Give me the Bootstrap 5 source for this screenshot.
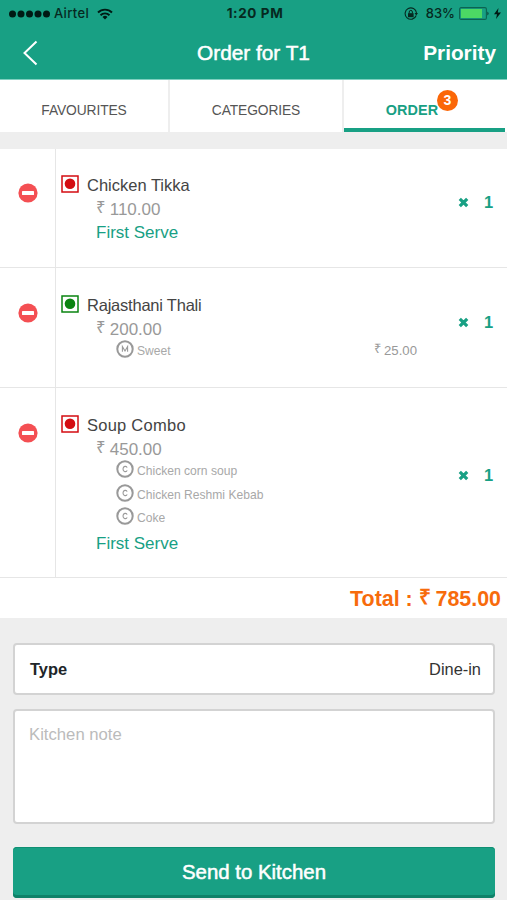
<!DOCTYPE html>
<html lang="en">
<head>
<meta charset="utf-8">
<meta name="viewport" content="width=device-width, initial-scale=1">
<title>Order for T1</title>
<link href="https://cdn.jsdelivr.net/npm/bootstrap@5.3.0/dist/css/bootstrap.min.css" rel="stylesheet">
<style>
  :root { --brand: #18a084; --line: #e6e6e6; --page: #eeeeee; --accent: #f76b0c; }
  body { background: var(--page); font-family: "Liberation Sans", Arial, sans-serif; color: #444; height: 900px; overflow: hidden; font-size: 16.5px; line-height: 24px; }
  svg { display: block; flex: none; }
  .status-bar { height: 27px; font: 500 13px/27px Inter, sans-serif; color: #06291f; padding: 0 6px 0 9px; }
  .top-area { background: var(--brand); height: 80px; border-bottom: 1px solid #7fd0c0; }
  .status-side { width: 150px; }
  .carrier { letter-spacing: .35px; margin-left: 3px; }
  .clock { font-weight: 700; letter-spacing: .6px; font-size: 13.5px; }
  .title-bar { height: 52px; color: #fff; font-size: 20.8px; padding: 0 11px 0 22px; }
  .title-side { width: 86px; }
  .title-side:first-child { width: 75px; }
  .semi { -webkit-text-stroke: .5px currentColor; }
  .order-tabs { height: 52px; background: #fff; padding-right: 1px; }
  .order-tabs .nav-link { color: #555; font-size: 13.8px; letter-spacing: -.1px; padding: 9px 0 0; border-right: 2px solid #eee; height: 52px; }
  .order-tabs .nav-link.active { color: var(--brand); font-size: 14.4px; letter-spacing: .1px; font-weight: 700; border-bottom: 4px solid var(--brand); border-right: 0; padding-top: 12px; }
  .tab-one { width: 170px; } .tab-two { width: 174px; } .tab-three { width: 161px; padding-right: 25px !important; }
  .count-dot { position: absolute; left: 93px; top: 10px; width: 21px; height: 21px; font-size: 14px; line-height: 21px; background: #fb6708; color: #fff; }
  .order-list { margin-top: 17px; }
  .order-item { background: #fff; border-bottom: 1px solid var(--line); min-height: 119px; }
  .order-item + .order-item { min-height: 120px; }
  .remove-cell { width: 56px; border-right: 1px solid var(--line); padding: 34px 0 0 18px; }
  .order-item + .order-item .remove-cell { padding-top: 35px; }
  .item-body { padding: 24px 0 22px 5px; }
  .order-item + .order-item .item-body { padding-top: 25px; }
  .item-name { gap: 8px; height: 24px; }
  .tighter { letter-spacing: -.22px; }
  .wider { letter-spacing: .25px; }
  .diet-icon { margin-top: -3px; }
  .item-price { color: #999; font-size: 17px; padding-left: 35px; height: 23px; line-height: 25px; white-space: nowrap; }
  .rupee { font-size: .98em; position: relative; top: -2px; margin-right: -1px; line-height: 1; }
  .item-serve { color: var(--brand); font-size: 17px; padding-left: 35px; line-height: 25px; height: 24px; }
  .item-extra { color: #a8a8a8; font-size: 12.1px; padding-left: 55px; height: 23.6px; gap: 3px; line-height: 20px; }
  .extra-price { font-size: 13.2px; color: #999; margin-right: 36px; }
  .extra-label { padding-top: 1px; }
  .qty-cell { width: 54px; color: var(--brand); font-weight: 700; padding: 40px 0 0 5px; gap: 15px; height: 66px; }
  .order-item + .order-item .qty-cell { padding-top: 41px; height: 67px; }
  .order-item + .order-item .qty-cell.combo-qty { padding-top: 74px; height: 100px; }
  .total-row { background: #fff; height: 40px; color: var(--accent); font-weight: 700; font-size: 21.4px; line-height: 43px; padding-right: 6px; }
  .order-form { padding: 25px 12px 0 13px; }
  .field-box { background: #fff; border: 2px solid #d3d3d3; border-radius: 4px; }
  .type-box { height: 52px; padding: 1px 12px 0 15px; color: #333; font-size: 16.4px; }
  .note-box { height: 115px; margin-top: 14px; padding: 12px 14px; font-size: 16.7px; resize: none; line-height: 24px; display: block; }
  .note-box::placeholder { color: #bbb; }
  .send-btn { margin-top: 23px; height: 51px; padding: 0; background: var(--brand); color: #fff; font-size: 20.4px; border: 0; border-radius: 4px; box-shadow: inset 0 -3px 0 #0f8269, inset 0 1px 0 #0f8f73; }
</style>
</head>
<body>
<svg width="0" height="0" class="position-absolute" aria-hidden="true">
  <symbol id="minus" viewBox="0 0 20 20"><circle cx="10" cy="10" r="9.6" fill="#f44f53"/><rect x="4" y="8" width="12" height="4" rx=".6" fill="#fff"/></symbol>
  <symbol id="diet" viewBox="0 0 18 18"><rect x="1" y="1" width="16" height="16" fill="#fff" stroke="currentColor" stroke-width="1.5"/><circle cx="9" cy="8.8" r="5.3" fill="currentColor"/></symbol>
  <symbol id="times" viewBox="0 0 11 11"><path d="M1.800 1.800l7.400 7.400M9.200 1.800l-7.400 7.400" stroke="currentColor" stroke-width="3.2"/></symbol>
  <symbol id="mark-m" viewBox="0 0 18 18"><circle cx="9" cy="9" r="7.7" fill="none" stroke="#999" stroke-width="2"/><path d="M6.4 11.700V6.600L9 11l2.600-4.400v5.100" fill="none" stroke="#999" stroke-width="1.100"/></symbol>
  <symbol id="mark-c" viewBox="0 0 18 18"><circle cx="9" cy="9" r="7.7" fill="none" stroke="#999" stroke-width="2"/><path d="M11.1 7.6C10.6 5.7 7 5.8 7 9s3.600 3.300 4.100 1.400" fill="none" stroke="#999" stroke-width="1.100"/></symbol>
</svg>

<header class="top-area">
  <div class="status-bar d-flex justify-content-between align-items-center">
    <div class="status-side d-flex align-items-center">
      <svg width="42" height="8" viewBox="0 0 42 8" fill="#001a14"><circle cx="3.500" cy="4" r="3.500"/><circle cx="12" cy="4" r="3.500"/><circle cx="20.500" cy="4" r="3.500"/><circle cx="29" cy="4" r="3.500"/><circle cx="37.500" cy="4" r="3.500"/></svg>
      <span class="carrier">Airtel</span>
      <svg class="ms-2" width="16" height="12" viewBox="0 0 16 12" fill="none" stroke="#001a14" stroke-width="1.900"><path d="M1 4.500a10 10 0 0 1 14 0M3.500 7.200a6.400 6.400 0 0 1 9 0"/><path d="M8 11.500L5.500 9a3.600 3.600 0 0 1 5 0z" fill="#001a14" stroke="none"/></svg>
    </div>
    <div class="clock">1:20 PM</div>
    <div class="status-side d-flex align-items-center justify-content-end">
      <svg width="14" height="14" viewBox="0 0 14 14"><path d="M12.200 8.500a5.700 5.700 0 1 1 .3-2.500" fill="none" stroke="#06291f" stroke-width="1.100"/><path d="M10.500 6h3.500l-1.700 2.500z" fill="#06291f"/><rect x="4" y="6.200" width="5.600" height="4" fill="#06291f"/><path d="M5.200 6.500V5a1.600 1.600 0 0 1 3.200 0v1.500" fill="none" stroke="#06291f" stroke-width="1"/></svg>
      <span class="ms-2">83%</span>
      <svg class="ms-1" width="31" height="13" viewBox="0 0 31 13"><rect x=".6" y=".6" width="26.800" height="11.800" rx="1.500" fill="none" stroke="#0c6351" stroke-width="1.100"/><rect x="2" y="2" width="21" height="9" fill="#4cd964"/><path d="M28.500 4.500q2 2 0 4z" fill="#06291f"/></svg>
      <svg class="ms-1" width="7" height="11" viewBox="0 0 7 11"><path d="M4.500 0L0 6.200h3L2 11l5-6.500H3.800z" fill="#001a14"/></svg>
    </div>
  </div>
  <div class="title-bar d-flex justify-content-between align-items-center">
    <div class="title-side"><svg width="16" height="26" viewBox="0 0 16 26"><path d="M14.500 1.500L2.500 13l12 11.500" fill="none" stroke="#fff" stroke-width="2"/></svg></div>
    <div class="semi">Order for T1</div>
    <div class="title-side text-end fw-bold">Priority</div>
  </div>
</header>

<nav class="nav order-tabs flex-nowrap">
  <a class="nav-link tab-one d-flex align-items-center justify-content-center" href="#">FAVOURITES</a>
  <a class="nav-link tab-two d-flex align-items-center justify-content-center" href="#">CATEGORIES</a>
  <a class="nav-link active tab-three d-flex align-items-center justify-content-center position-relative" href="#">ORDER<span class="count-dot rounded-circle text-center">3</span></a>
</nav>

<main>
  <div class="order-list">
    <div class="order-item d-flex">
      <div class="remove-cell"><svg width="20" height="20"><use href="#minus"/></svg></div>
      <div class="item-body flex-grow-1">
        <div class="item-name d-flex align-items-center"><svg class="diet-icon" width="18" height="18" color="#d40d12"><use href="#diet"/></svg>Chicken Tikka</div>
        <div class="item-price"><span class="rupee">₹</span> 110.00</div>
        <div class="item-serve">First Serve</div>
      </div>
      <div class="qty-cell d-flex align-items-center"><svg width="11" height="11"><use href="#times"/></svg>1</div>
    </div>
    <div class="order-item d-flex">
      <div class="remove-cell"><svg width="20" height="20"><use href="#minus"/></svg></div>
      <div class="item-body flex-grow-1">
        <div class="item-name tighter d-flex align-items-center"><svg class="diet-icon" width="18" height="18" color="#0a8410"><use href="#diet"/></svg>Rajasthani Thali</div>
        <div class="item-price"><span class="rupee">₹</span> 200.00</div>
        <div class="item-extra d-flex"><svg width="18" height="18"><use href="#mark-m"/></svg><span class="extra-label">Sweet</span><span class="extra-price extra-label ms-auto"><span class="rupee">₹</span> 25.00</span></div>
      </div>
      <div class="qty-cell d-flex align-items-center"><svg width="11" height="11"><use href="#times"/></svg>1</div>
    </div>
    <div class="order-item d-flex">
      <div class="remove-cell"><svg width="20" height="20"><use href="#minus"/></svg></div>
      <div class="item-body flex-grow-1">
        <div class="item-name wider d-flex align-items-center"><svg class="diet-icon" width="18" height="18" color="#d40d12"><use href="#diet"/></svg>Soup Combo</div>
        <div class="item-price"><span class="rupee">₹</span> 450.00</div>
        <div class="item-extra d-flex"><svg width="18" height="18"><use href="#mark-c"/></svg><span class="extra-label">Chicken corn soup</span></div>
        <div class="item-extra d-flex"><svg width="18" height="18"><use href="#mark-c"/></svg><span class="extra-label">Chicken Reshmi Kebab</span></div>
        <div class="item-extra d-flex"><svg width="18" height="18"><use href="#mark-c"/></svg><span class="extra-label">Coke</span></div>
        <div class="item-serve">First Serve</div>
      </div>
      <div class="qty-cell combo-qty d-flex align-items-center"><svg width="11" height="11"><use href="#times"/></svg>1</div>
    </div>
  </div>
  <div class="total-row text-end">Total : <span class="rupee">₹</span> 785.00</div>

  <form class="order-form">
    <div class="field-box type-box d-flex justify-content-between align-items-center"><span class="fw-bold text-dark">Type</span><span>Dine-in</span></div>
    <textarea class="field-box note-box w-100" placeholder="Kitchen note"></textarea>
    <button type="button" class="btn send-btn w-100 semi">Send to Kitchen</button>
  </form>
</main>
<script src="https://cdn.jsdelivr.net/npm/bootstrap@5.3.0/dist/js/bootstrap.bundle.min.js"></script>
</body>
</html>
